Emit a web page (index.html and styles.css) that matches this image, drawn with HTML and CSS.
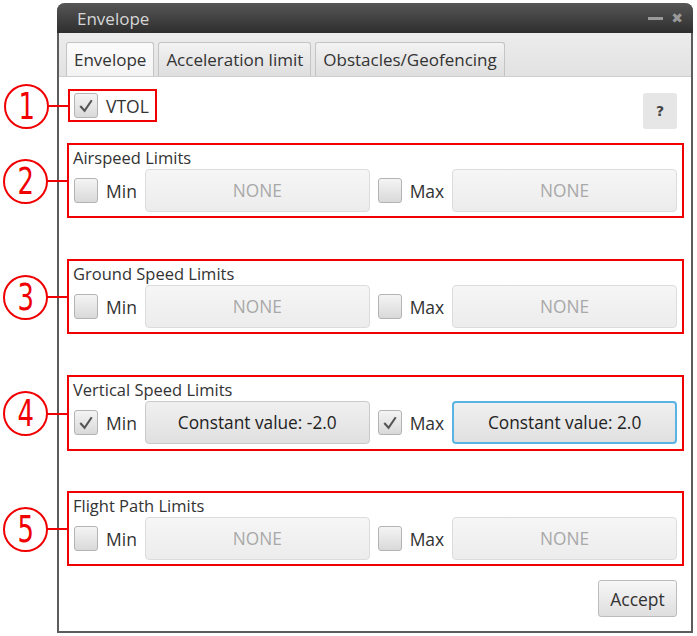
FILE: index.html
```html
<!DOCTYPE html>
<html lang="en">
<head>
    <meta charset="UTF-8">
    <meta name="viewport" content="width=device-width, initial-scale=1.0">
    <title>Envelope</title>
    <link rel="stylesheet" href="styles.css">
</head>
<body>
    <div class="window">
        <div class="titlebar">
            <span class="title">Envelope</span>
            <div class="controls">
                <span class="minimize"></span>
                <span class="close">&#10006;</span>
            </div>
        </div>
        <div class="tabs">
            <div class="tab active">Envelope</div>
            <div class="tab">Acceleration limit</div>
            <div class="tab">Obstacles/Geofencing</div>
        </div>
        <div class="content">
            <div class="top-row">
                <div class="mark vtol">
                    <span class="callout"><span class="num">1</span></span>
                    <span class="box checked"><svg viewBox="0 0 23 23"><polyline points="5.5,12 10,17 17.5,6"/></svg></span>
                    <span class="lbl">VTOL</span>
                </div>
                <button class="help">?</button>
            </div>

            <div class="mark limits">
                <span class="callout"><span class="num">2</span></span>
                <div class="limits-title">Airspeed Limits</div>
                <div class="limits-row">
                    <span class="box"></span><span class="lbl">Min</span><button class="value" disabled>NONE</button>
                    <span class="box"></span><span class="lbl">Max</span><button class="value" disabled>NONE</button>
                </div>
            </div>

            <div class="mark limits">
                <span class="callout"><span class="num">3</span></span>
                <div class="limits-title">Ground Speed Limits</div>
                <div class="limits-row">
                    <span class="box"></span><span class="lbl">Min</span><button class="value" disabled>NONE</button>
                    <span class="box"></span><span class="lbl">Max</span><button class="value" disabled>NONE</button>
                </div>
            </div>

            <div class="mark limits tall">
                <span class="callout"><span class="num">4</span></span>
                <div class="limits-title">Vertical Speed Limits</div>
                <div class="limits-row">
                    <span class="box checked"><svg viewBox="0 0 23 23"><polyline points="5.5,12 10,17 17.5,6"/></svg></span><span class="lbl">Min</span><button class="value">Constant value: -2.0</button>
                    <span class="box checked"><svg viewBox="0 0 23 23"><polyline points="5.5,12 10,17 17.5,6"/></svg></span><span class="lbl">Max</span><button class="value focused">Constant value: 2.0</button>
                </div>
            </div>

            <div class="mark limits">
                <span class="callout"><span class="num">5</span></span>
                <div class="limits-title">Flight Path Limits</div>
                <div class="limits-row">
                    <span class="box"></span><span class="lbl">Min</span><button class="value" disabled>NONE</button>
                    <span class="box"></span><span class="lbl">Max</span><button class="value" disabled>NONE</button>
                </div>
            </div>

            <div class="footer">
                <button class="accept">Accept</button>
            </div>
        </div>
    </div>
</body>
</html>
```

FILE: styles.css
```css
body {
    margin: 0;
    background-color: #fff;
    font-family: "Open Sans", "Noto Sans", sans-serif;
    color: #333;
}

.window {
    margin: 3px 0 0 57px;
    width: 632px;
    border: 2px solid #5c5c5c;
    border-top: none;
    border-radius: 8px 8px 0 0;
    background-color: #fff;
}

/* title bar */
.titlebar {
    height: 30px;
    margin: 0 -2px;
    padding: 0 10px 0 20px;
    display: flex;
    align-items: center;
    justify-content: space-between;
    background: linear-gradient(#565656, #2e2e2e);
    border-radius: 8px 8px 0 0;
}

.title {
    color: #d6d6d6;
    font-size: 17px;
}

.controls {
    display: flex;
    align-items: center;
    gap: 8px;
}

.minimize {
    width: 15px;
    height: 3px;
    background-color: #9a9a9a;
}

.close {
    color: #9a9a9a;
    font-size: 14px;
    font-family: "DejaVu Sans", sans-serif;
    font-weight: bold;
}

/* tabs */
.tabs {
    height: 43px;
    padding-left: 7px;
    display: flex;
    align-items: flex-end;
    gap: 4px;
    background: linear-gradient(#ececec, #e2e2e2);
    border-bottom: 1px solid #cfcfcf;
}

.tab {
    height: 33px;
    padding: 0 7px;
    display: flex;
    align-items: center;
    font-size: 17px;
    color: #333;
    border: 1px solid #c4c4c4;
    border-bottom: none;
    border-radius: 3px 3px 0 0;
    background: linear-gradient(#f3f3f3, #dedede);
}

.tab.active {
    background: linear-gradient(#fbfbfb, #f3f3f3);
}

/* content */
.content {
    padding: 12px 7px 14px 8px;
}

.top-row {
    display: flex;
    justify-content: space-between;
    align-items: flex-start;
    margin-bottom: 14px;
}

.mark {
    position: relative;
    border: 2px solid #f00000;
}

.callout {
    position: absolute;
    left: -66px;
    top: 50%;
    width: 41px;
    height: 41px;
    margin-top: -22px;
    border: 2px solid #f00000;
    border-radius: 50%;
    display: flex;
    align-items: center;
    justify-content: center;
}

.callout .num {
    color: #f00000;
    font-family: "DejaVu Sans", sans-serif;
    font-size: 37px;
    line-height: 1;
    transform: scaleX(0.7);
}

.callout::after {
    content: "";
    position: absolute;
    left: 100%;
    top: 50%;
    margin-top: -1px;
    width: 22px;
    height: 2px;
    background-color: #f00000;
}

.vtol {
    margin-left: 1px;
    height: 29px;
    padding: 0 6px 0 4px;
    display: flex;
    align-items: center;
    gap: 8px;
}

.vtol .lbl {
    font-size: 17.5px;
}

.help {
    margin: 4px 7px 0 0;
    width: 34px;
    height: 36px;
    border: none;
    border-radius: 3px;
    background-color: #e6e6e6;
    font-family: "DejaVu Sans", sans-serif;
    font-size: 14px;
    font-weight: bold;
    color: #444;
}

/* checkbox */
.box {
    width: 22px;
    height: 23px;
    flex: none;
    border: 1px solid #b3b3b3;
    border-radius: 3px;
    background: linear-gradient(#f4f4f4, #d9d9d9);
}

.box svg {
    display: block;
    width: 22px;
    height: 23px;
}

.box polyline {
    fill: none;
    stroke: #555;
    stroke-width: 2.2;
}

/* limit groups */
.limits {
    height: 71px;
    padding: 0 5px 0 4px;
    margin-bottom: 41px;
}

.limits.tall {
    height: 72px;
    margin-bottom: 40px;
}

.limits-title {
    font-size: 16.5px;
    line-height: 23px;
    padding-top: 1px;
}

.limits-row {
    display: grid;
    grid-template-columns: 24px auto 1fr 24px auto 1fr;
    align-items: center;
    column-gap: 8px;
    padding-left: 1px;
}

.lbl {
    font-size: 17.5px;
    color: #333;
}

.value {
    height: 43px;
    border: 1px solid #c9c9c9;
    border-radius: 4px;
    background: linear-gradient(#f0f0f0, #e0e0e0);
    font-family: inherit;
    font-size: 17.3px;
    color: #222;
}

.value:disabled {
    border-color: #dcdcdc;
    background: linear-gradient(#f6f6f6, #ececec);
    color: #a8a8a8;
}

.value.focused {
    border: 2px solid #5ab4e3;
}

.footer {
    display: flex;
    justify-content: flex-end;
    margin-top: -27px;
    padding-right: 7px;
}

.accept {
    width: 79px;
    height: 37px;
    border: 1px solid #bcbcbc;
    border-radius: 3px;
    background: linear-gradient(#f7f7f7, #dedede);
    font-family: inherit;
    font-size: 17.5px;
    color: #333;
}
```
